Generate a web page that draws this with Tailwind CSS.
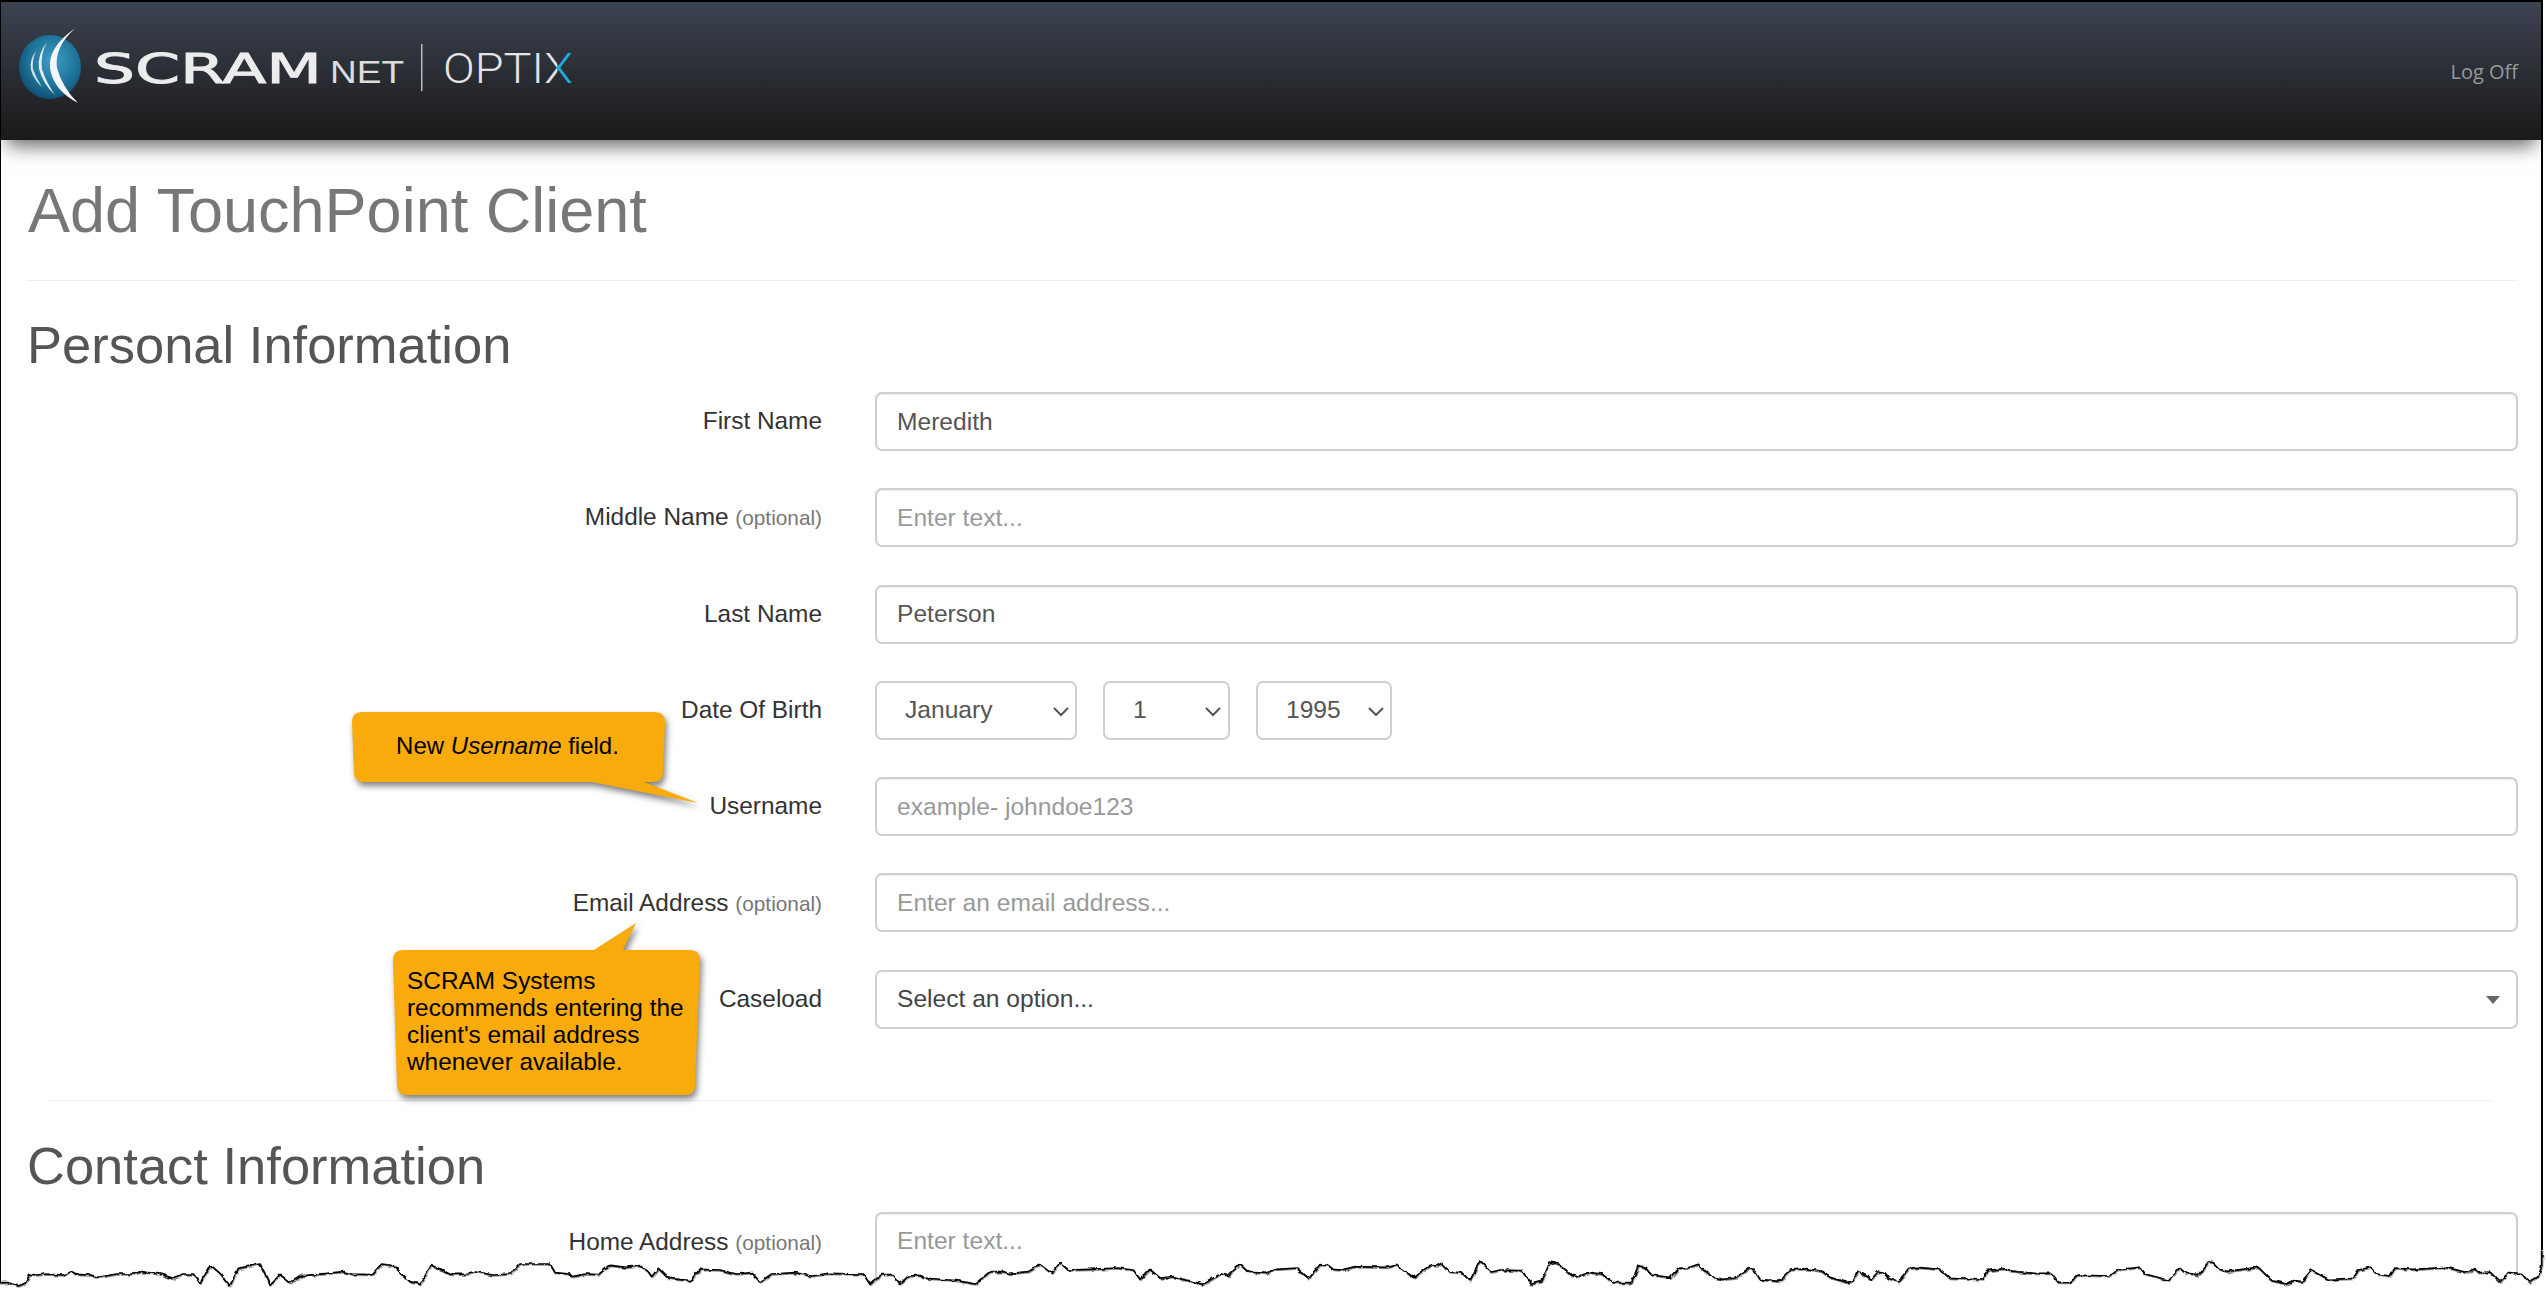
<!DOCTYPE html>
<html lang="en">
<head>
    <meta charset="UTF-8">
    <meta name="viewport" content="width=device-width, initial-scale=1.0">
    <title>Add TouchPoint Client</title>
    <script src="https://cdn.jsdelivr.net/npm/@tailwindcss/browser@4"></script>
</head>
<body class="bg-white font-['Liberation_Sans',Arial,sans-serif] text-[24.4px] text-[#333]">
<div class="relative w-[2546px] h-[1296px] overflow-hidden">
    <div class="w-[2543px] h-[1296px] border-l border-r-2 border-t-2 border-black overflow-hidden">

        <!-- header -->
        <header class="relative z-10 h-[138px] flex justify-between items-start bg-gradient-to-b from-[#3c4351] to-[#1a1a1a] shadow-[0_12px_18px_-6px_rgba(0,0,0,0.6)]">
            <svg class="block w-[600px] h-[138px]" viewBox="1 2 600 138">
                <defs>
                    <radialGradient id="globe" cx="0.55" cy="0.4" r="0.65">
                        <stop offset="0" stop-color="#3f9fc8"/>
                        <stop offset="0.6" stop-color="#1f7399"/>
                        <stop offset="1" stop-color="#0e4a70"/>
                    </radialGradient>
                    <linearGradient id="xfill" x1="0" x2="1" y1="0" y2="0">
                        <stop offset="0.88" stop-color="#e4e4e4"/>
                        <stop offset="0.88" stop-color="#19aee0"/>
                    </linearGradient>
                </defs>
                <ellipse cx="50" cy="67" rx="31" ry="32" fill="url(#globe)"/>
                <path d="M75.5 28 Q48 47 50 68 Q53 90 78 103 Q62 87 57 68 Q54 47 75.5 28Z" fill="#f4f6f7"/>
                <path d="M47 42 Q37 55 39 69 Q43 84 55 95 Q46 82 42 69 Q40 55 47 42Z" fill="#e2eef3"/>
                <path d="M36 51 Q29 60 31 70 Q34 80 42 87 Q36 78 33 69 Q32 60 36 51Z" fill="#cfe3ec"/>
                <text x="94" y="83" font-family="DejaVu Sans" font-size="41" textLength="228" lengthAdjust="spacingAndGlyphs" fill="#ececec" stroke="#ececec" stroke-width="0.9">SCRAM</text>
                <text x="330" y="83" font-family="Liberation Sans" font-size="32" textLength="74" lengthAdjust="spacingAndGlyphs" fill="#dcdcdc">NET</text>
                <rect x="421" y="44" width="1.5" height="47" fill="#b8b8b8"/>
                <text x="443" y="83" font-family="Roboto" font-weight="300" font-size="43" textLength="130" lengthAdjust="spacingAndGlyphs" fill="url(#xfill)">OPTIX</text>
            </svg>
            <a href="#" class="mt-[57px] mr-[23px] font-['Open_Sans',sans-serif] text-[20px] leading-[26px] text-[#989898]">Log Off</a>
        </header>

        <main class="pl-[26px] pr-[23px]">
            <h1 class="pt-[36px] pb-[36px] pl-[1px] border-b border-[#eee] text-[63px] leading-[68px] text-[#777]">Add TouchPoint Client</h1>

            <h2 class="mt-[35px] mb-[19px] text-[52.5px] leading-[57px] text-[#555]">Personal Information</h2>
            <form class="flex flex-col gap-[37.3px]">
                <div class="flex items-center gap-[53px]">
                    <label class="w-[795px] text-right">First Name</label>
                    <input type="text" value="Meredith" class="flex-1 h-[59px] px-[20px] rounded-[7px] border-2 border-[#d0d0d0] text-[24.6px] text-[#555] shadow-[inset_0_1px_2px_rgba(0,0,0,0.08)]">
                </div>
                <div class="flex items-center gap-[53px]">
                    <label class="w-[795px] text-right">Middle Name <span class="text-[20.8px] text-[#777]">(optional)</span></label>
                    <input type="text" placeholder="Enter text..." class="flex-1 h-[59px] px-[20px] rounded-[7px] border-2 border-[#d0d0d0] text-[24.6px] text-[#555] placeholder:text-[#999] shadow-[inset_0_1px_2px_rgba(0,0,0,0.08)]">
                </div>
                <div class="flex items-center gap-[53px]">
                    <label class="w-[795px] text-right">Last Name</label>
                    <input type="text" value="Peterson" class="flex-1 h-[59px] px-[20px] rounded-[7px] border-2 border-[#d0d0d0] text-[24.6px] text-[#555] shadow-[inset_0_1px_2px_rgba(0,0,0,0.08)]">
                </div>
                <div class="flex items-center gap-[53px]">
                    <label class="w-[795px] text-right">Date Of Birth</label>
                    <div class="flex gap-[26px]">
                        <div class="relative w-[202px]">
                            <select class="appearance-none w-full h-[59px] pl-[28px] rounded-[7px] border-2 border-[#d0d0d0] text-[24.6px] text-[#555]"><option>January</option></select>
                            <svg class="absolute right-[8px] top-[26px] w-[16px] h-[10px]" viewBox="0 0 16 10" fill="none" stroke="#555" stroke-width="2"><path d="M1 1l7 7 7-7"/></svg>
                        </div>
                        <div class="relative w-[127px]">
                            <select class="appearance-none w-full h-[59px] pl-[28px] rounded-[7px] border-2 border-[#d0d0d0] text-[24.6px] text-[#555]"><option>1</option></select>
                            <svg class="absolute right-[9px] top-[26px] w-[16px] h-[10px]" viewBox="0 0 16 10" fill="none" stroke="#555" stroke-width="2"><path d="M1 1l7 7 7-7"/></svg>
                        </div>
                        <div class="relative w-[136px]">
                            <select class="appearance-none w-full h-[59px] pl-[28px] rounded-[7px] border-2 border-[#d0d0d0] text-[24.6px] text-[#555]"><option>1995</option></select>
                            <svg class="absolute right-[8px] top-[26px] w-[16px] h-[10px]" viewBox="0 0 16 10" fill="none" stroke="#555" stroke-width="2"><path d="M1 1l7 7 7-7"/></svg>
                        </div>
                    </div>
                </div>
                <div class="flex items-center gap-[53px]">
                    <label class="w-[795px] text-right">Username</label>
                    <input type="text" placeholder="example- johndoe123" class="flex-1 h-[59px] px-[20px] rounded-[7px] border-2 border-[#d0d0d0] text-[24.6px] text-[#555] placeholder:text-[#999] shadow-[inset_0_1px_2px_rgba(0,0,0,0.08)]">
                </div>
                <div class="flex items-center gap-[53px]">
                    <label class="w-[795px] text-right">Email Address <span class="text-[20.8px] text-[#777]">(optional)</span></label>
                    <input type="text" placeholder="Enter an email address..." class="flex-1 h-[59px] px-[20px] rounded-[7px] border-2 border-[#d0d0d0] text-[24.6px] text-[#555] placeholder:text-[#999] shadow-[inset_0_1px_2px_rgba(0,0,0,0.08)]">
                </div>
                <div class="flex items-center gap-[53px]">
                    <label class="w-[795px] text-right">Caseload</label>
                    <div class="relative flex-1">
                        <select class="appearance-none w-full h-[59px] pl-[20px] rounded-[7px] border-2 border-[#d0d0d0] text-[24.6px] text-[#444]"><option>Select an option...</option></select>
                        <div class="absolute right-[18px] top-[26px] w-0 h-0 border-x-[7px] border-x-transparent border-t-[8px] border-t-[#666]"></div>
                    </div>
                </div>
            </form>

            <div class="mt-[71px] ml-[23px] mr-[26px] border-b border-[#eee]"></div>

            <h2 class="mt-[36px] mb-[18px] text-[52.5px] leading-[57px] text-[#555]">Contact Information</h2>
            <div class="flex items-start gap-[53px]">
                <label class="w-[795px] text-right pt-[12px]">Home Address <span class="text-[20.8px] text-[#777]">(optional)</span></label>
                <input type="text" placeholder="Enter text..." class="flex-1 h-[80px] pb-[21px] px-[20px] rounded-[7px] border-2 border-[#d0d0d0] text-[24.6px] text-[#555] placeholder:text-[#999] shadow-[inset_0_1px_2px_rgba(0,0,0,0.08)]">
            </div>
        </main>
    </div>

    <!-- callouts laid over the form -->
    <svg class="absolute left-[-1px] top-0 z-20 w-[2546px] h-[1296px] pointer-events-none drop-shadow-[2px_4px_3px_rgba(0,0,0,0.5)]" viewBox="0 0 2546 1296">
        <path fill="#f8ab0a" d="M363 712H656Q666 712 666 722L664 772Q664 782 654 782H645L699 803L593 782H365Q355 782 355 772L353 722Q353 712 363 712Z"/>
        <path fill="#f8ab0a" d="M404 950H595L637 923L624 950H691Q701 950 701 960L696 1085Q696 1095 686 1095H408Q398 1095 398 1085L394 960Q394 950 404 950Z"/>
    </svg>
    <div class="absolute z-30 left-[351px] top-[712px] w-[313px] h-[68px] flex items-center justify-center text-[24px] text-black">
        <span>New <em>Username</em> field.</span>
    </div>
    <div class="absolute z-30 left-[407px] top-[967px] leading-[27px] text-black">
        SCRAM Systems<br>recommends entering the<br>client's email address<br>whenever available.
    </div>

    <!-- torn bottom edge, coordinates are 3x page pixels -->
    <svg class="absolute z-40 left-0 top-[1250px] w-[2546px] h-[46px]" viewBox="0 0 7638 138">
        <defs>
            <filter id="rough" filterUnits="userSpaceOnUse" x="-50" y="-50" width="7800" height="300" color-interpolation-filters="sRGB">
                <feTurbulence type="fractalNoise" baseFrequency="0.05" numOctaves="2" seed="4"/>
                <feDisplacementMap in="SourceGraphic" scale="12" xChannelSelector="R" yChannelSelector="G"/>
            </filter>
            <path id="tear" d="M-20 98L0 98 25 98 55 108 75 100 90 72 110 75 135 72 190 75 215 65 240 74 270 75 295 82 350 72 400 72 425 65 480 72 520 85 545 72 580 72 600 100 630 44 660 70 690 107 715 55 780 42 812 105 840 73 870 98 905 77 945 74 1030 65 1055 72 1115 74 1145 42 1180 47 1230 95 1260 103 1295 44 1350 73 1405 72 1430 66 1480 75 1530 72 1560 42 1650 42 1665 68 1710 72 1715 80 1760 72 1795 74 1830 46 1880 52 1920 47 1945 65 1955 80 1975 55 2005 85 2070 92 2100 58 2160 60 2210 72 2255 68 2280 96 2315 72 2385 68 2435 78 2485 70 2590 72 2610 103 2645 74 2680 74 2700 102 2725 78 2760 76 2770 84 2850 90 2890 95 2925 102 2970 65 3010 65 3030 70 3085 65 3120 44 3155 70 3180 38 3205 60 3270 58 3350 54 3400 60 3420 88 3450 58 3480 84 3520 80 3610 103 3660 72 3685 76 3720 44 3745 66 3795 70 3830 58 3890 54 3925 84 3960 44 3985 46 4000 58 4025 60 4065 50 4160 52 4190 46 4240 82 4290 46 4310 48 4325 40 4350 66 4385 68 4410 92 4440 32 4475 66 4500 60 4565 62 4595 102 4625 95 4650 36 4680 44 4715 76 4730 80 4775 68 4805 72 4840 98 4895 98 4915 46 4935 52 4955 75 5010 82 5035 54 5060 55 5095 43 5135 80 5170 88 5205 84 5245 56 5260 58 5280 88 5335 94 5370 60 5420 56 5465 64 5490 82 5540 97 5560 92 5575 64 5615 88 5635 64 5650 66 5665 85 5695 96 5725 56 5750 52 5820 58 5850 85 5950 90 5960 62 6010 56 6025 62 6100 70 6155 70 6175 97 6210 97 6235 75 6325 78 6360 58 6420 52 6435 72 6505 90 6540 52 6560 70 6595 74 6625 36 6640 38 6660 58 6680 64 6775 52 6815 92 6860 102 6880 92 6905 95 6935 60 6985 88 7060 85 7075 60 7110 52 7130 72 7170 78 7185 54 7240 58 7340 52 7400 68 7420 58 7440 68 7470 66 7500 96 7525 68 7565 70 7585 96 7615 78 7625 50 7625 -20 7700 -20 7700 200 -20 200Z"/>
        </defs>
        <g filter="url(#rough)">
            <use href="#tear" fill="white"/>
            <use href="#tear" fill="none" stroke="black" stroke-width="5" stroke-linejoin="round" class="drop-shadow-[2px_3px_2px_rgba(0,0,0,0.45)]"/>
        </g>
    </svg>
</div>
</body>
</html>
